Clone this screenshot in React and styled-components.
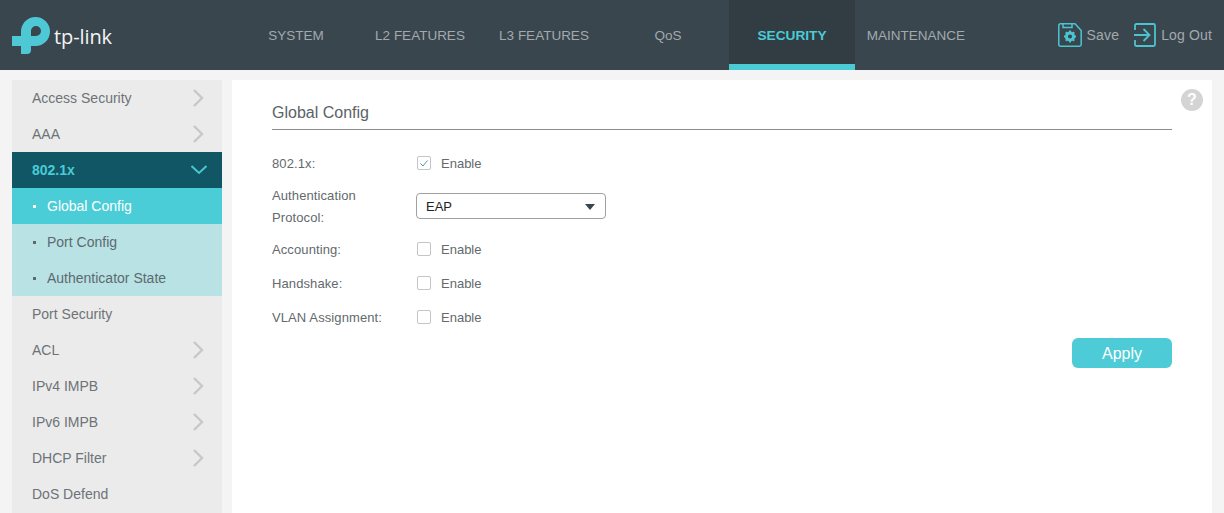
import styled, { createGlobalStyle } from "styled-components";

const GlobalStyle = createGlobalStyle`
  html, body {
    margin: 0;
    height: 513px;
    overflow: hidden;
    background: #f4f4f4;
    font-family: "Liberation Sans", Arial, sans-serif;
  }
`;

const Header = styled.header`
  display: flex;
  align-items: stretch;
  height: 70px;
  background: #39464e;
`;

const LogoBox = styled.div`
  display: flex;
  align-items: center;
  width: 234px;
  padding: 0 0 0 12px;
  box-sizing: border-box;
  gap: 4px;
`;

const LogoText = styled.span`
  color: #f2f4f4;
  font-family: "Open Sans", sans-serif;
  font-size: 20px;
  font-weight: 400;
  line-height: 26px;
  margin-top: 3px;
  letter-spacing: -0.1px;
`;

const Nav = styled.nav`
  display: flex;
`;

const Tab = styled.div`
  display: flex;
  align-items: center;
  justify-content: center;
  box-sizing: border-box;
  width: ${(p) => (p.$active ? "126px" : "124px")};
  height: 70px;
  margin: ${(p) => (p.$active ? "0 -1px" : "0")};
  font-size: ${(p) => (p.$active ? "13.7px" : "13.5px")};
  font-weight: ${(p) => (p.$active ? 700 : 400)};
  color: ${(p) => (p.$active ? "#4acbd6" : "#a3a9ad")};
  background: ${(p) => (p.$active ? "#313d43" : "transparent")};
  border-bottom: 6px solid ${(p) => (p.$active ? "#4acbd6" : "transparent")};
  border-top: 6px solid transparent;
`;

const HeaderActions = styled.div`
  display: flex;
  align-items: center;
  margin-left: auto;
  padding-right: 12px;
`;

const HeaderAction = styled.div`
  display: flex;
  align-items: center;
  gap: 5px;
  margin-left: ${(p) => p.$left}px;
  color: #a3a9ad;
  font-size: 14px;
  letter-spacing: 0.15px;
`;

const Body = styled.div`
  display: flex;
  gap: 10px;
  padding: 10px 12px 0;
`;

const Sidebar = styled.aside`
  flex: 0 0 210px;
  background: #ebebeb;
`;

const MenuItem = styled.div`
  display: flex;
  align-items: center;
  justify-content: space-between;
  height: 36px;
  padding: 0 ${(p) => (p.$open ? 15 : 18)}px 0 20px;
  box-sizing: border-box;
  font-size: 14px;
  color: ${(p) => (p.$open ? "#4acbd6" : "#6d7377")};
  font-weight: ${(p) => (p.$open ? 700 : 400)};
  background: ${(p) => (p.$open ? "#115664" : "transparent")};
`;

const SubItem = styled.div`
  display: flex;
  align-items: center;
  height: 36px;
  padding-left: 21px;
  font-size: 14px;
  color: ${(p) => (p.$active ? "#ffffff" : "#5c6a70")};
  background: ${(p) => (p.$active ? "#4acdd6" : "#b8e2e3")};
`;

const Bullet = styled.span`
  width: 3px;
  height: 3px;
  margin-right: 11px;
  background: ${(p) => (p.$active ? "#ffffff" : "#5c6a70")};
`;

const Main = styled.main`
  position: relative;
  flex: 1;
  height: 433px;
  padding: 0 40px;
  background: #ffffff;
`;

const Title = styled.h2`
  margin: 0 0 16px;
  padding-top: 23px;
  height: 26px;
  border-bottom: 1px solid #8c8c8c;
  font-size: 16px;
  line-height: 20px;
  font-weight: 400;
  color: #5c6266;
`;

const HelpBadge = styled.div`
  position: absolute;
  top: 9px;
  right: 9px;
  width: 22px;
  height: 22px;
  border-radius: 50%;
  background: #d4d4d4;
  color: #ffffff;
  font-size: 16px;
  font-weight: 700;
  line-height: 22px;
  text-align: center;
`;

const FormRow = styled.div`
  display: flex;
  align-items: center;
  height: ${(p) => (p.$tall ? 52 : 34)}px;
`;

const Label = styled.div`
  flex: 0 0 144px;
  padding-top: 2px;
  font-size: 13px;
  line-height: 22px;
  letter-spacing: 0.1px;
  color: #63696d;
`;

const CheckLabel = styled.label`
  display: flex;
  align-items: center;
  gap: 10px;
  font-size: 13px;
  color: #63696d;
`;

const CheckBox = styled.span`
  display: flex;
  align-items: center;
  justify-content: center;
  width: 12px;
  height: 12px;
  margin-left: 1px;
  border: 1px solid #c4c4c4;
  border-radius: 2px;
`;

const Select = styled.div`
  display: flex;
  align-items: center;
  justify-content: space-between;
  box-sizing: border-box;
  width: 190px;
  height: 26px;
  padding: 0 10px 0 9px;
  border: 1px solid #a0a0a0;
  border-radius: 4px;
  font-size: 13px;
  color: #222222;
`;

const Caret = styled.span`
  width: 0;
  height: 0;
  margin-top: 1px;
  border-left: 5px solid transparent;
  border-right: 5px solid transparent;
  border-top: 6px solid #39464e;
`;

const ButtonRow = styled.div`
  display: flex;
  justify-content: flex-end;
  margin-top: 4px;
`;

const ApplyButton = styled.button`
  width: 100px;
  height: 30px;
  padding: 1px 0 0;
  border: 0;
  border-radius: 6px;
  background: #4dcbd6;
  color: #ffffff;
  font-family: inherit;
  font-size: 16px;
`;

const Chevron = () => (
  <svg width="12" height="18" viewBox="0 0 12 18" fill="none" stroke="#c8c8c8" strokeWidth="2.400">
    <path d="M2 1l8 8-8 8" />
  </svg>
);

const ChevronDown = () => (
  <svg width="16" height="10" viewBox="0 0 16 10" fill="none" stroke="#4cc4cf" strokeWidth="2">
    <path d="M0.500 1l7.500 7 7.500-7" />
  </svg>
);

const Logo = () => (
  <svg width="38" height="37" viewBox="0 0 38 37" fill="#4dc8d4">
    <path
      fillRule="evenodd"
      d="M9 19V14.500A14.500 14.500 0 1 1 23.500 29H19V33Q19 37 15 37H9V29H0V19H9ZM19 19H24A5 5 0 1 0 19 14Z"
    />
  </svg>
);

const SaveIcon = () => (
  <svg width="24" height="24" viewBox="0 0 24 24" fill="none" stroke="#4cc4cf" strokeWidth="1.500">
    <path d="M2.500 0.800H17L23.200 7.500V21.500Q23.200 23.200 21.500 23.200H2.500Q0.800 23.200 0.800 21.500V2.500Q0.800 0.800 2.500 0.800Z" />
    <path d="M5 1V4.500H14V1" />
    <circle cx="12" cy="13.500" r="3.600" strokeWidth="3" />
    <path d="M12 7.500V9.500M12 17.500V19.500M6 13.500H8M16 13.500H18M7.800 9.300L9.200 10.700M14.800 16.300L16.200 17.700M7.800 17.700L9.200 16.300M14.800 10.700L16.200 9.300" strokeWidth="2" />
  </svg>
);

const LogoutIcon = () => (
  <svg width="22" height="24" viewBox="0 0 22 24" fill="none" stroke="#4cc4cf" strokeWidth="1.800">
    <path d="M1 7V2.500Q1 1 2.500 1H19.500Q21 1 21 2.500V21.500Q21 23 19.500 23H2.500Q1 23 1 21.500V17" />
    <path d="M0 12H15M9.500 6L15.500 12L9.500 18" />
  </svg>
);

const TABS = ["SYSTEM", "L2 FEATURES", "L3 FEATURES", "QoS", "SECURITY", "MAINTENANCE"];

const Check = ({ checked }) => (
  <CheckLabel>
    <CheckBox>
      {checked && (
        <svg width="8" height="7" viewBox="0 0 8 7" fill="none" stroke="#5a9aa0" strokeWidth="1">
          <path d="M0.500 3.500L3 6L7.500 0.500" />
        </svg>
      )}
    </CheckBox>
    Enable
  </CheckLabel>
);

export default function App() {
  return (
    <>
      <GlobalStyle />
      <Header>
        <LogoBox>
          <Logo />
          <LogoText>tp-link</LogoText>
        </LogoBox>
        <Nav>
          {TABS.map((tab) => (
            <Tab key={tab} $active={tab === "SECURITY"}>{tab}</Tab>
          ))}
        </Nav>
        <HeaderActions>
          <HeaderAction $left={0}><SaveIcon />Save</HeaderAction>
          <HeaderAction $left={15}><LogoutIcon />Log Out</HeaderAction>
        </HeaderActions>
      </Header>
      <Body>
        <Sidebar>
          <MenuItem>Access Security<Chevron /></MenuItem>
          <MenuItem>AAA<Chevron /></MenuItem>
          <MenuItem $open>802.1x<ChevronDown /></MenuItem>
          <SubItem $active><Bullet $active />Global Config</SubItem>
          <SubItem><Bullet />Port Config</SubItem>
          <SubItem><Bullet />Authenticator State</SubItem>
          <MenuItem>Port Security</MenuItem>
          <MenuItem>ACL<Chevron /></MenuItem>
          <MenuItem>IPv4 IMPB<Chevron /></MenuItem>
          <MenuItem>IPv6 IMPB<Chevron /></MenuItem>
          <MenuItem>DHCP Filter<Chevron /></MenuItem>
          <MenuItem>DoS Defend</MenuItem>
        </Sidebar>
        <Main>
          <HelpBadge>?</HelpBadge>
          <Title>Global Config</Title>
          <FormRow>
            <Label>802.1x:</Label>
            <Check checked />
          </FormRow>
          <FormRow $tall>
            <Label>Authentication<br />Protocol:</Label>
            <Select>EAP<Caret /></Select>
          </FormRow>
          <FormRow>
            <Label>Accounting:</Label>
            <Check />
          </FormRow>
          <FormRow>
            <Label>Handshake:</Label>
            <Check />
          </FormRow>
          <FormRow>
            <Label>VLAN Assignment:</Label>
            <Check />
          </FormRow>
          <ButtonRow>
            <ApplyButton>Apply</ApplyButton>
          </ButtonRow>
        </Main>
      </Body>
    </>
  );
}
